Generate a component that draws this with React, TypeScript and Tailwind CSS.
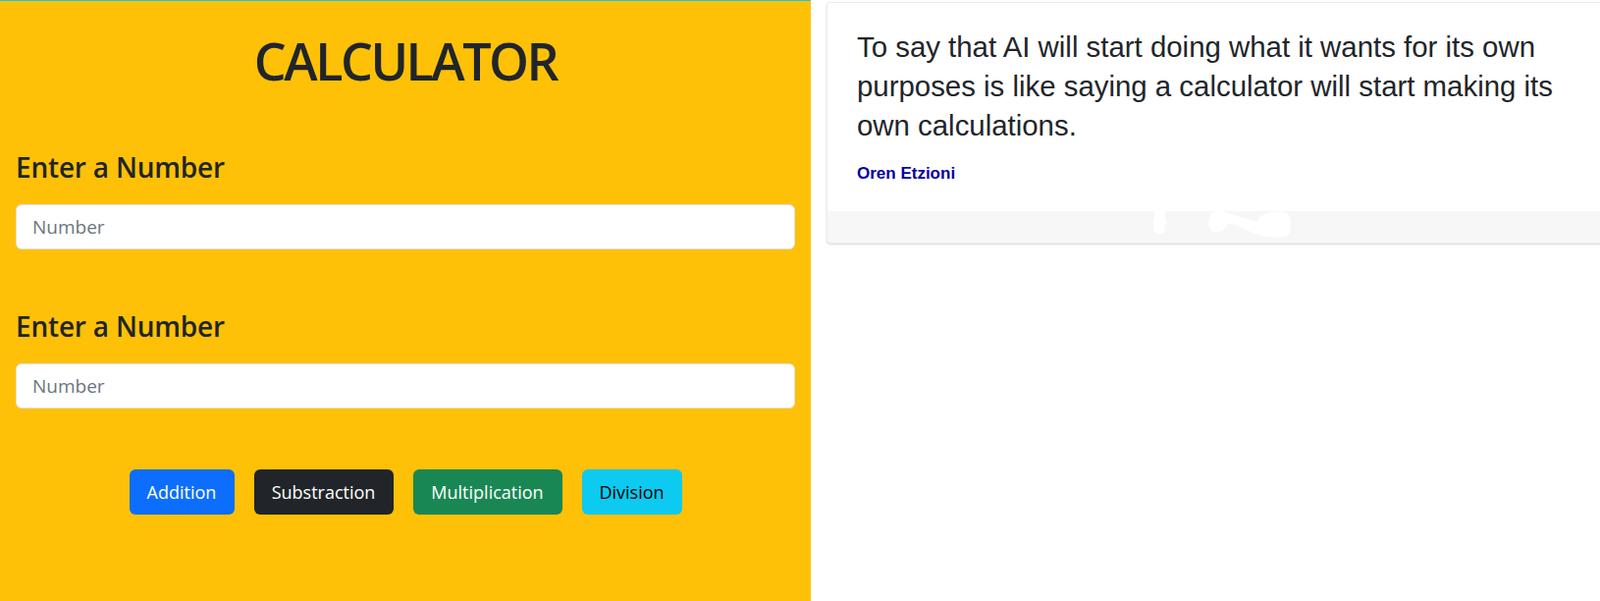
// Calculator page - two number inputs, operation buttons and a quote card

const buttons = [
  { label: 'Addition', className: 'w-[107px] bg-[#0d6efd] text-white' },
  { label: 'Substraction', className: 'w-[142px] bg-[#212529] text-white' },
  { label: 'Multiplication', className: 'w-[152px] bg-[#198754] text-white' },
  { label: 'Division', className: 'w-[102px] bg-[#0dcaf0] text-black' },
];

function NumberField() {
  return (
    <>
      <h3 className="h-[34px] text-[28px] leading-[34px] font-semibold tracking-[-0.2px] text-[#212529]">
        Enter a Number
      </h3>
      <input
        type="number"
        placeholder="Number"
        className="mt-[21px] block h-[46px] w-full rounded-md border border-[#dee2e6] bg-white px-4 text-[19px] text-[#212529] outline-none placeholder:text-[#6c757d]"
      />
    </>
  );
}

function Calculator() {
  return (
    <div
      className="h-[612px] w-[826px] shrink-0 border-t border-[#0dcaf0] bg-[#ffc107] px-4 pt-[30px]"
      style={{ fontFamily: '"Open Sans", "Noto Sans", sans-serif' }}
    >
      <h1 className="h-[62px] text-center text-[52px] leading-[62px] font-semibold tracking-[-2.5px] text-[#212529]">
        CALCULATOR
      </h1>

      <div className="mt-[60px]">
        <NumberField />
      </div>
      <div className="mt-[61px]">
        <NumberField />
      </div>

      {/* Operations */}
      <div className="mt-[62px] flex justify-center gap-5">
        {buttons.map((b) => (
          <button
            key={b.label}
            className={`h-[46px] rounded-md text-[18px] ${b.className}`}
          >
            {b.label}
          </button>
        ))}
      </div>
    </div>
  );
}

function QuoteCard() {
  return (
    <div
      className="mt-[2px] ml-4 h-[246px] w-[820px] shrink-0 overflow-hidden rounded-[4px] border border-[#ececec] bg-white shadow-[0_1px_2px_rgba(0,0,0,0.15)]"
      style={{ fontFamily: '"Liberation Sans", Arial, sans-serif' }}
    >
      <div className="h-[212px] pt-[25px] pl-[30px] pr-[58px]">
        <p className="text-[29.4px] leading-[40px] text-[#212529]">
          To say that AI will start doing what it wants for its own purposes is like saying a
          calculator will start making its own calculations.
        </p>
        <p className="mt-[17px] text-[17px] leading-[24px] font-bold text-[#0000a0]">
          Oren Etzioni
        </p>
      </div>
      <div className="h-[33px] bg-[#f7f7f7]">
        <svg width="150" height="33" viewBox="0 0 150 33" className="ml-[330px]">
          <path
            d="M3 0 H14 V8 C16 11 15 14 13 16 C15 19 13 23 8 23 C3 23 2 19 3 16 C1 13 2 9 3 6 Z"
            fill="#ffffff"
          />
          <path
            d="M60 4 C62 -1 74 -1 80 3 L108 11 C110 2 124 -1 136 1 C142 3 143 12 141 21 C140 27 130 28 118 26 C110 25 100 21 88 15 L78 12 C76 20 66 24 61 20 C57 16 58 9 60 4 Z"
            fill="#ffffff"
          />
        </svg>
      </div>
    </div>
  );
}

export default function App() {
  return (
    <div className="flex h-[612px] w-[1630px] items-start overflow-hidden bg-white">
      <Calculator />
      <QuoteCard />
    </div>
  );
}
